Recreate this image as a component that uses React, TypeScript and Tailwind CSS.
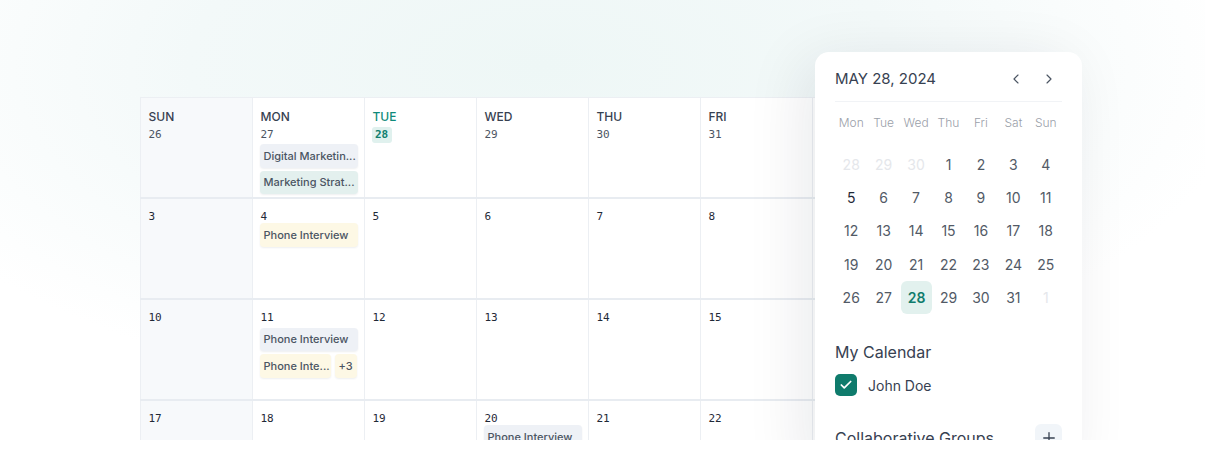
import React from "react";
import { ChevronLeft, ChevronRight, Check, Plus } from "lucide-react";

type Tone = "slate" | "teal" | "yellow";

const toneCls: Record<Tone, string> = {
  slate: "bg-[#eef1f6]",
  teal: "bg-[#e3f0ee]",
  yellow: "bg-[#fdf8e5]",
};

function EventChip({ text, tone, className = "" }: { text: string; tone: Tone; className?: string }) {
  return (
    <div
      className={`flex h-[23.5px] items-center overflow-hidden whitespace-nowrap rounded-[4px] px-[4px] text-[11px] font-medium text-[#4b5563] shadow-[0_1px_2px_rgba(15,23,42,0.07)] ${toneCls[tone]} ${className}`}
    >
      {text}
    </div>
  );
}

const sans = "font-['Inter','Noto_Sans',sans-serif]";
const mono = "font-['DejaVu_Sans_Mono','Liberation_Mono',monospace]";

const headerDays = ["SUN", "MON", "TUE", "WED", "THU", "FRI", "SAT"];
const headerDates = [26, 27, 28, 29, 30, 31, 1];
const bodyRows = [
  [3, 4, 5, 6, 7, 8, 9],
  [10, 11, 12, 13, 14, 15, 16],
  [17, 18, 19, 20, 21, 22, 23],
];

function HeaderRow() {
  return (
    <div className="grid h-[101px] grid-cols-[repeat(7,112px)] border-b-2 border-[#e8ecf1]">
      {headerDays.map((d, i) => (
        <div
          key={d}
          className={`border-l border-[#eceff3] px-[6.5px] pt-[11px] ${i === 0 ? "bg-[#f7f9fb]" : "bg-white"}`}
        >
          <div
            className={`pl-[1px] text-[12px] font-medium leading-[16px] ${i === 2 ? "text-[#0f8a7a]" : "text-[#374151]"}`}
          >
            {d}
          </div>
          <div className="mt-[2px] flex">
            {i === 2 ? (
              <span
                className={`${mono} rounded-[3px] bg-[#e0f1ee] px-[3.5px] text-[11px] font-bold leading-[16px] text-[#0f7f6f]`}
              >
                {headerDates[i]}
              </span>
            ) : (
              <span className={`${mono} pl-[1px] pt-[1px] text-[11px] leading-[13px] text-[#4b5563]`}>
                {headerDates[i]}
              </span>
            )}
          </div>
          {i === 1 && (
            <div className="mt-[3px] flex flex-col gap-[3px]">
              <EventChip text="Digital Marketin..." tone="slate" />
              <EventChip text="Marketing Strat..." tone="teal" />
            </div>
          )}
        </div>
      ))}
    </div>
  );
}

function BodyRow({ dates, row }: { dates: number[]; row: number }) {
  return (
    <div className="grid h-[101px] grid-cols-[repeat(7,112px)] border-b-2 border-[#e8ecf1]">
      {dates.map((d, i) => (
        <div
          key={d}
          className={`border-l border-[#eceff3] px-[6.5px] pt-[12px] ${i === 0 ? "bg-[#f7f9fb]" : "bg-white"}`}
        >
          <div className={`${mono} pl-[1px] text-[11px] leading-[12px] text-[#1f2937]`}>{d}</div>
          {row === 0 && i === 1 && (
            <div className="mt-0 flex flex-col gap-[3px]">
              <EventChip text="Phone Interview" tone="yellow" />
            </div>
          )}
          {row === 1 && i === 1 && (
            <div className="mt-[3.5px] flex flex-col gap-[3px]">
              <EventChip text="Phone Interview" tone="slate" />
              <div className="flex gap-[4px]">
                <EventChip text="Phone Inte..." tone="yellow" className="w-[71px]" />
                <EventChip text="+3" tone="yellow" className="w-[22px] justify-center px-0" />
              </div>
            </div>
          )}
          {row === 2 && i === 3 && (
            <div className="mt-0 flex flex-col gap-[3px]">
              <EventChip text="Phone Interview" tone="slate" />
            </div>
          )}
        </div>
      ))}
    </div>
  );
}

const miniRows: { n: number; muted?: boolean; dark?: boolean; sel?: boolean }[][] = [
  [{ n: 28, muted: true }, { n: 29, muted: true }, { n: 30, muted: true }, { n: 1 }, { n: 2 }, { n: 3 }, { n: 4 }],
  [{ n: 5, dark: true }, { n: 6 }, { n: 7 }, { n: 8 }, { n: 9 }, { n: 10 }, { n: 11 }],
  [{ n: 12 }, { n: 13 }, { n: 14 }, { n: 15 }, { n: 16 }, { n: 17 }, { n: 18 }],
  [{ n: 19 }, { n: 20 }, { n: 21 }, { n: 22 }, { n: 23 }, { n: 24 }, { n: 25 }],
  [{ n: 26 }, { n: 27 }, { n: 28, sel: true }, { n: 29 }, { n: 30 }, { n: 31 }, { n: 1, muted: true }],
];

function SidePanel() {
  return (
    <div className="absolute left-[815px] top-[52px] h-[420px] w-[267px] rounded-[14px] bg-white px-[20px] pt-[12px] shadow-[-12px_8px_60px_rgba(15,23,42,0.09)]">
      <div className="flex h-[30px] items-center justify-between">
        <span className="text-[15px] leading-[20px] text-[#374151]">MAY 28, 2024</span>
        <div className="flex items-center gap-[17px] pr-[5px] text-[#4b5563]">
          <ChevronLeft size={16} strokeWidth={1.75} />
          <ChevronRight size={16} strokeWidth={1.75} />
        </div>
      </div>
      <div className="mt-[7px] h-px bg-[#f1f3f6]" />
      <div className="mt-[13px] grid grid-cols-7 text-center text-[12px] font-light leading-[16px] text-[#9aa0a9]">
        {["Mon", "Tue", "Wed", "Thu", "Fri", "Sat", "Sun"].map((w) => (
          <span key={w} className="whitespace-nowrap">
            {w}
          </span>
        ))}
      </div>
      <div className="mt-[16.5px] grid auto-rows-[33.4px] grid-cols-7">
        {miniRows.flat().map((c, idx) => (
          <div key={idx} className="flex items-center justify-center">
            {c.sel ? (
              <span className="ml-[1px] flex h-[33px] w-[33px] items-center justify-center rounded-[6px] bg-[#e2f1ee] text-[14px] font-semibold text-[#0f7b6c]">
                {c.n}
              </span>
            ) : (
              <span
                className={`text-[14px] ${c.muted ? "text-[#e5e7eb]" : c.dark ? "text-[#1f2937]" : "text-[#525a66]"}`}
              >
                {c.n}
              </span>
            )}
          </div>
        ))}
      </div>
      <div className="mt-[26px] text-[16px] leading-[24px] text-[#374151]">My Calendar</div>
      <div className="mt-[10px] flex items-center gap-[11px]">
        <span className="flex h-[22px] w-[22px] items-center justify-center rounded-[5px] bg-[#0f7b6c]">
          <Check size={14} strokeWidth={3} color="#ffffff" />
        </span>
        <span className="text-[14px] text-[#374151]">John Doe</span>
      </div>
      <div className="mt-[28px] flex items-center justify-between">
        <span className="text-[16px] leading-[24px] text-[#374151]">Collaborative Groups</span>
        <span className="flex h-[27px] w-[27px] items-center justify-center rounded-[6px] bg-[#f1f5f9] text-[#374151]">
          <Plus size={18} strokeWidth={1.75} />
        </span>
      </div>
    </div>
  );
}

export default function App() {
  return (
    <div className={`h-[461px] w-[1205px] bg-white ${sans}`}>
      <div className="relative h-[440px] overflow-hidden bg-[radial-gradient(ellipse_65%_85%_at_45%_15%,#eef7f6_0%,#f3f9f9_45%,#ffffff_90%)]">
        <div className="pl-[140px] pt-[97px]">
          <div className="w-[784px] border-t border-[#eceff3]">
            <HeaderRow />
            {bodyRows.map((r, i) => (
              <BodyRow key={i} dates={r} row={i} />
            ))}
          </div>
        </div>
        <SidePanel />
      </div>
    </div>
  );
}
